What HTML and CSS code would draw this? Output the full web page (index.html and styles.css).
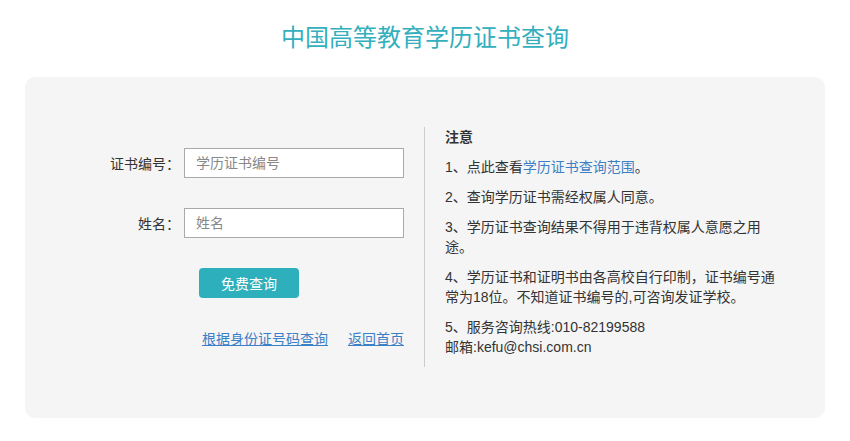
FILE: index.html
```html
<!DOCTYPE html>
<html lang="zh-CN">
<head>
<meta charset="utf-8">
<title>中国高等教育学历证书查询</title>
<link rel="stylesheet" href="styles.css">
</head>
<body>
<h1 class="title">中国高等教育学历证书查询</h1>
<div class="card">
  <div class="form-col">
    <div class="row">
      <label class="label" for="zsbh">证书编号<span class="colon">：</span></label>
      <input class="input" id="zsbh" type="text" placeholder="学历证书编号">
    </div>
    <div class="row">
      <label class="label" for="xm">姓名<span class="colon">：</span></label>
      <input class="input" id="xm" type="text" placeholder="姓名">
    </div>
    <div class="btn-row">
      <button class="btn" type="button">免费查询</button>
    </div>
    <div class="links">
      <a class="link" href="#">根据身份证号码查询</a>
      <a class="link" href="#">返回首页</a>
    </div>
  </div>
  <div class="notes">
    <p class="notes-title">注意</p>
    <p>1、点此查看<a class="inline-link" href="#">学历证书查询范围</a>。</p>
    <p>2、查询学历证书需经权属人同意。</p>
    <p>3、学历证书查询结果不得用于违背权属人意愿之用途。</p>
    <p>4、学历证书和证明书由各高校自行印制，证书编号通常为18位。不知道证书编号的,可咨询发证学校。</p>
    <p>5、服务咨询热线:010-82199588<br>邮箱:kefu@chsi.com.cn</p>
  </div>
</div>
</body>
</html>
```
FILE: styles.css
```css
* { box-sizing: border-box; }
body {
  margin: 0;
  background: #fff;
  font-family: "Liberation Sans", "Noto Sans CJK SC", sans-serif;
  font-size: 14px;
  color: #333;
}
.title {
  margin: 0;
  padding-top: 20px;
  font-size: 24px;
  line-height: 36px;
  font-weight: normal;
  color: #33afbd;
  text-align: center;
}
.card {
  width: 800px;
  margin: 21px auto 0;
  background: #f5f5f5;
  border-radius: 10px;
  padding: 50px 0 51px;
  display: flex;
  align-items: stretch;
}
.form-col {
  width: 399px;
  padding: 21px 20px 0 0;
  display: flex;
  flex-direction: column;
}
.row {
  display: flex;
  justify-content: flex-end;
  align-items: center;
  height: 30px;
  margin-bottom: 30px;
}
.label {
  margin-right: 4px;
  line-height: 30px;
  color: #333;
}
.colon {
  font-family: "Noto Sans CJK TC", "Noto Sans CJK SC", sans-serif;
}
.input {
  width: 220px;
  height: 30px;
  border: 1px solid #aaa;
  background: #fff;
  padding: 0 11px;
  font-family: inherit;
  font-size: 14px;
  color: #333;
  outline: none;
}
.input::placeholder { color: #888; }
.btn-row {
  display: flex;
  justify-content: flex-end;
  padding-right: 105px;
}
.btn {
  width: 100px;
  height: 30px;
  border: none;
  border-radius: 4px;
  background: #2eb0bc;
  color: #fff;
  font-family: inherit;
  font-size: 14px;
  padding: 0;
}
.links {
  display: flex;
  justify-content: flex-end;
  gap: 20px;
  margin-top: 31px;
  line-height: 20px;
}
.link, .inline-link {
  color: #3b7fc6;
}
.inline-link { text-decoration: none; }
.notes {
  width: 360px;
  border-left: 1px solid #ccc;
  padding: 0 0 0 20px;
}
.notes p {
  margin: 0 0 10px;
  line-height: 20px;
  width: 335px;
}
.notes .notes-title {
  font-weight: bold;
}
```
